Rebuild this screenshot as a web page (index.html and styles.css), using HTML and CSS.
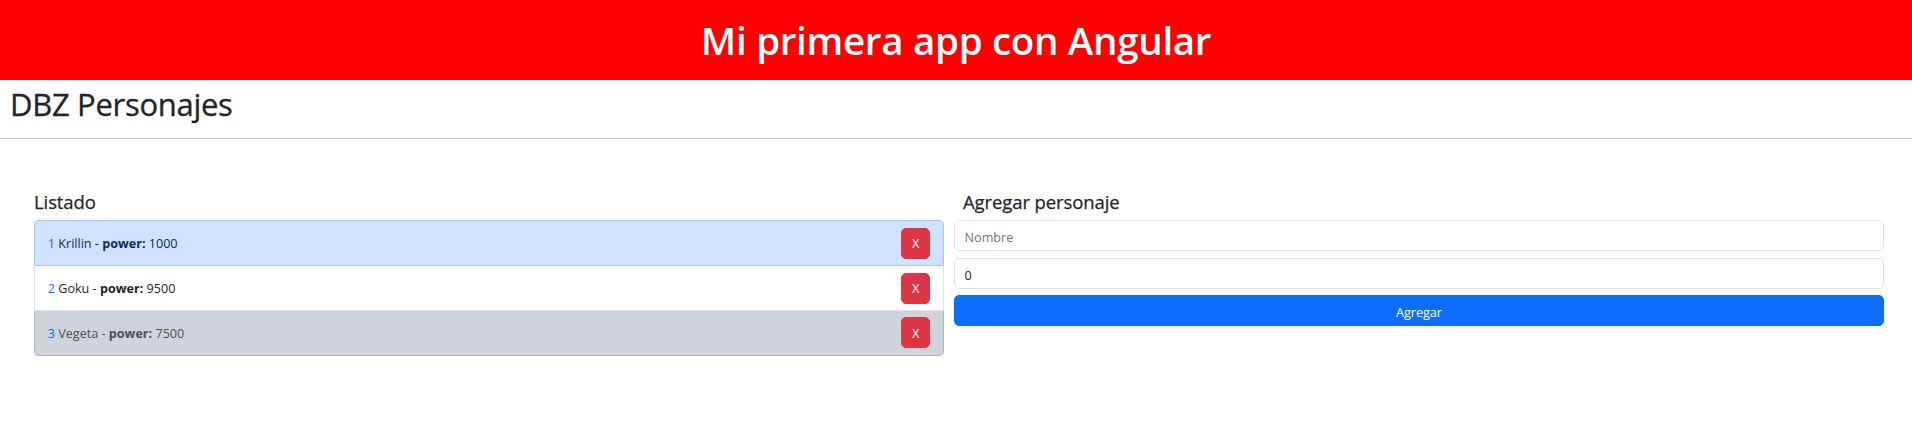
FILE: index.html
```html
<!DOCTYPE html>
<html lang="es">
<head>
<meta charset="utf-8">
<title>Mi primera app con Angular</title>
<link rel="stylesheet" href="styles.css">
</head>
<body>
<header class="app-header">
  <h1 class="app-title">Mi primera app con Angular</h1>
</header>
<div class="page-head">
  <h1 class="page-title">DBZ Personajes</h1>
</div>
<hr class="divider">
<main class="content">
  <section class="col-list">
    <h4 class="section-title">Listado</h4>
    <ul class="list">
      <li class="item item-primary">
        <span class="item-text"><span class="num">1</span> Krillin - <strong>power:</strong> 1000</span>
        <button class="btn-del" type="button">X</button>
      </li>
      <li class="item">
        <span class="item-text"><span class="num">2</span> Goku - <strong>power:</strong> 9500</span>
        <button class="btn-del" type="button">X</button>
      </li>
      <li class="item item-dark">
        <span class="item-text"><span class="num">3</span> Vegeta - <strong>power:</strong> 7500</span>
        <button class="btn-del" type="button">X</button>
      </li>
    </ul>
  </section>
  <section class="col-form">
    <h4 class="section-title form-title">Agregar personaje</h4>
    <form class="form">
      <input class="field" type="text" placeholder="Nombre">
      <input class="field" type="text" value="0">
      <button class="btn-add" type="button">Agregar</button>
    </form>
  </section>
</main>
</body>
</html>
```

FILE: styles.css
```css
* { box-sizing: border-box; }

body {
  margin: 0;
  font-family: "Open Sans", "Noto Sans", "Liberation Sans", sans-serif;
  font-size: 12.6px;
  line-height: 1.5;
  color: #212529;
  background: #ffffff;
}

.app-header {
  background: #ff0000;
  height: 80px;
  display: flex;
  align-items: center;
  justify-content: center;
}

.app-title {
  margin: 0;
  color: #ffffff;
  font-size: 38.5px;
  font-weight: 600;
  line-height: 1.2;
  letter-spacing: -0.3px;
}

.page-head {
  padding: 5px 10px 0;
}

.page-title {
  margin: 0;
  font-size: 31px;
  font-weight: 500;
  line-height: 38.4px;
  letter-spacing: -0.3px;
  -webkit-text-stroke: 0.3px #212529;
}

.divider {
  margin: 15px 0 0;
  border: 0;
  border-top: 1px solid #c8c9ca;
}

.content {
  display: grid;
  grid-template-columns: 910px 1fr;
  gap: 10px;
  padding: 51px 28px 0 34px;
}

.section-title {
  margin: 0 0 7px;
  font-size: 18.5px;
  font-weight: 500;
  line-height: 23px;
  letter-spacing: -0.1px;
  -webkit-text-stroke: 0.25px #212529;
}

.form-title {
  padding-left: 9px;
}

.list {
  list-style: none;
  margin: 0;
  padding: 0;
  border-radius: 5px;
}

.item {
  display: flex;
  align-items: center;
  justify-content: space-between;
  padding: 6.4px 12.8px;
  min-height: 44px;
  background: #ffffff;
  border: 1px solid #dee2e6;
  border-top-width: 0;
  color: #212529;
}

.item:first-child {
  border-top-width: 1px;
  border-radius: 5px 5px 0 0;
}

.item:last-child {
  border-radius: 0 0 5px 5px;
}

.item-primary {
  background: #cfe2ff;
  border-color: #9ec5fe;
  color: #052c65;
}

.item-dark {
  background: #ced4da;
  border-color: #adb5bd;
  color: #495057;
}

.item-text {
  white-space: nowrap;
  padding-top: 3px;
}

.num {
  color: #0d6efd;
}

.item-text strong {
  font-weight: 700;
}

.btn-del {
  width: 29px;
  height: 31px;
  padding: 1px 0 0;
  border: 1px solid #dc3545;
  border-radius: 5px;
  background: #dc3545;
  color: #ffffff;
  font-family: inherit;
  font-size: 12.8px;
  line-height: 1;
  cursor: pointer;
}

.form {
  display: flex;
  flex-direction: column;
  gap: 6.4px;
  margin: 0;
}

.field {
  display: block;
  width: 100%;
  height: 31px;
  padding: 6.5px 9.6px 3px;
  border: 1px solid #dee2e6;
  border-radius: 5px;
  font-family: inherit;
  font-size: 12.6px;
  color: #212529;
  background: #ffffff;
  outline: none;
}

.field::placeholder {
  color: #6c757d;
}

.btn-add {
  display: block;
  width: 100%;
  height: 31px;
  padding: 3px 0 0;
  border: 1px solid #0d6efd;
  border-radius: 5px;
  background: #0d6efd;
  color: #ffffff;
  font-family: inherit;
  font-size: 12.6px;
  cursor: pointer;
}
```
